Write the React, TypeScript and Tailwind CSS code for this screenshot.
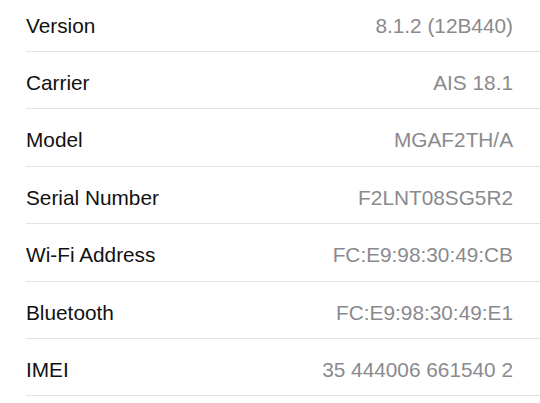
const rows: [string, string][] = [
  ["Version", "8.1.2 (12B440)"],
  ["Carrier", "AIS 18.1"],
  ["Model", "MGAF2TH/A"],
  ["Serial Number", "F2LNT08SG5R2"],
  ["Wi-Fi Address", "FC:E9:98:30:49:CB"],
  ["Bluetooth", "FC:E9:98:30:49:E1"],
  ["IMEI", "35 444006 661540 2"],
];

export default function App() {
  return (
    <div className="h-[403px] w-[540px] overflow-hidden bg-white font-['Liberation_Sans',Arial,sans-serif]">
      <div className="mt-[-5.4px] pl-[26px]">
        {rows.map(([label, value]) => (
          <div
            key={label}
            className="flex h-[57.4px] items-center justify-between border-b border-[#e2e2e4] pr-[27px] pt-[5px] text-[20.8px]"
          >
            <span className="text-[#111]">{label}</span>
            <span className="text-[#8a8a8e]">{value}</span>
          </div>
        ))}
      </div>
    </div>
  );
}
